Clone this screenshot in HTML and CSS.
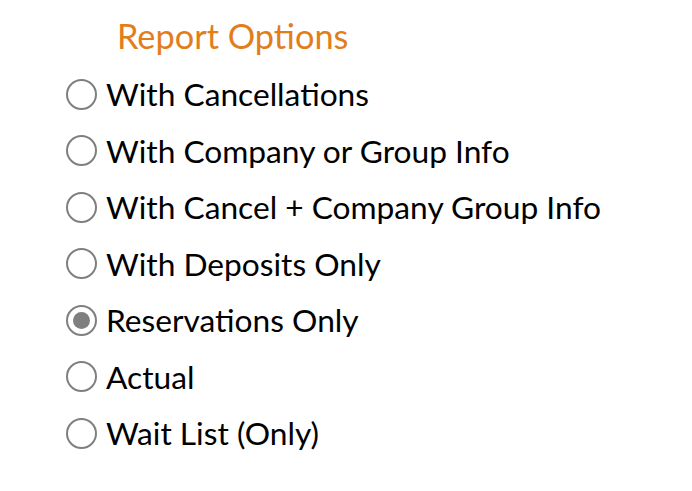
FILE: index.html
```html
<!DOCTYPE html>
<html lang="en">
<head>
  <meta charset="UTF-8">
  <title>Report Options</title>
  <link rel="stylesheet" href="styles.css">
</head>
<body>
  <div class="report-options">
    <h2>Report Options</h2>

    <label class="option"><input type="radio" name="report"> With Cancellations</label>
    <label class="option"><input type="radio" name="report"> With Company or Group Info</label>
    <label class="option"><input type="radio" name="report"> With Cancel + Company Group Info</label>
    <label class="option"><input type="radio" name="report"> With Deposits Only</label>
    <label class="option"><input type="radio" name="report" checked> Reservations Only</label>
    <label class="option"><input type="radio" name="report"> Actual</label>
    <label class="option"><input type="radio" name="report"> Wait List (Only)</label>
  </div>
</body>
</html>
```

FILE: styles.css
```css
* { box-sizing: border-box; }

body {
  margin: 0;
  background: white;
  color: black;
  font-family: Lato, "Open Sans", sans-serif;
}

.report-options {
  padding: 16px 0 0 66px;
}

h2 {
  margin: 0 0 10px 51px;
  font-size: 34.3px;
  font-weight: normal;
  color: #e27d1c;
  line-height: 40px;
}

.option {
  display: flex;
  align-items: center;
  gap: 9px;
  height: 56.5px;
  font-size: 31.7px;
}

.option input {
  appearance: none;
  flex: none;
  margin: 0;
  width: 31px;
  height: 31px;
  border: 2px solid #7f7f7f;
  border-radius: 50%;
  background: white;
  display: grid;
  place-items: center;
}

.option input:checked::after {
  content: "";
  width: 17px;
  height: 17px;
  border-radius: 50%;
  background: #7f7f7f;
}
```
